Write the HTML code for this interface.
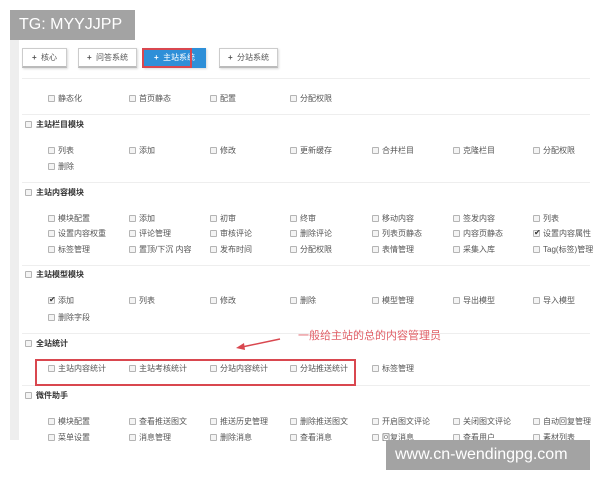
<!DOCTYPE html>
<html><head><meta charset="utf-8"><style>
*{margin:0;padding:0;box-sizing:border-box}
body{width:600px;height:480px;background:#fff;position:relative;overflow:hidden;font-family:"Liberation Sans","Noto Sans CJK SC",sans-serif}
.a{position:absolute}
.pg{left:10px;top:10px;width:580px;height:430px;background:#fff}
.strip{left:10px;top:10px;width:9px;height:430px;background:#eeeeee}
.cb{position:absolute;width:7px;height:7px;border:1px solid #b4b4b4;background:#f4f4f4;border-radius:1px}
.t{position:absolute;font-size:8px;color:#555;line-height:10px;white-space:nowrap}
.h{position:absolute;font-size:8px;color:#333;font-weight:bold;line-height:10px;white-space:nowrap}
.ln{position:absolute;left:22px;width:568px;height:1px;background:#eee}
.btn{position:absolute;top:48px;height:20px;border:1px solid #ccc;border-bottom:2px solid #bbb;background:#fff;font-size:8px;color:#555;line-height:17px;text-align:center;box-shadow:1px 1px 2px rgba(0,0,0,.15)}
.lab{position:absolute;background:#a3a3a3;color:#fff;font-size:16px;line-height:30px;padding-left:9px}
.rb{position:absolute;border-width:2px;border-style:solid;border-color:#d9474f}
</style></head><body>
<div class="a pg"></div><div class="a strip"></div>
<div class="lab" style="left:10px;top:10px;width:125px">TG: MYYJJPP</div>
<div class="btn" style="left:22px;width:45px"><b>+</b>&nbsp; 核心</div>
<div class="btn" style="left:78px;width:59px"><b>+</b>&nbsp; 问答系统</div>
<div class="btn" style="left:143px;width:63px;background:#2e8fd8;border-color:#2e8fd8;color:#fff"><b>+</b>&nbsp; 主站系统</div>
<div class="rb" style="left:142px;top:48px;width:50px;height:20px"></div>
<div class="btn" style="left:219px;width:59px"><b>+</b>&nbsp; 分站系统</div>
<div class="ln" style="top:78px"></div>
<div id="c"></div>
<div class="rb" style="left:35px;top:359px;width:321px;height:27px"></div>
<div class="a" style="left:298px;top:327px;font-size:11px;color:#e06068;white-space:nowrap">一般给主站的总的内容管理员</div>
<svg class="a" style="left:230px;top:334px" width="60" height="20"><line x1="50" y1="5" x2="12" y2="13" stroke="#d9474f" stroke-width="1.5"/><polygon points="6,14 14,9 15,16" fill="#d9474f"/></svg>
<div class="lab" style="left:386px;top:440px;width:204px;font-size:16px">www.cn-wendingpg.com</div>
<script>
var X=[48,129,210,290,372,453,533];
var rows=[
[94,["静态化","首页静态","配置","分配权限"]],
[146,["列表","添加","修改","更新缓存","合并栏目","克隆栏目","分配权限"]],
[162,["删除"]],
[214,["模块配置","添加","初审","终审","移动内容","签发内容","列表"]],
[229,["设置内容权重","评论管理","审核评论","删除评论","列表页静态","内容页静态","设置内容属性"]],
[245,["标签管理","置顶/下沉 内容","发布时间","分配权限","表情管理","采集入库","Tag(标签)管理"]],
[296,["添加","列表","修改","删除","模型管理","导出模型","导入模型"]],
[313,["删除字段"]],
[364,["主站内容统计","主站考核统计","分站内容统计","分站推送统计","标签管理"]],
[417,["模块配置","查看推送图文","推送历史管理","删除推送图文","开启图文评论","关闭图文评论","自动回复管理"]],
[433,["菜单设置","消息管理","删除消息","查看消息","回复消息","查看用户","素材列表"]]];
var heads=[[120,"主站栏目模块"],[188,"主站内容模块"],[270,"主站模型模块"],[339,"全站统计"],[391,"微件助手"]];
var lines=[114,182,265,333,385];
var h="";
rows.forEach(function(r){r[1].forEach(function(s,i){h+='<div class="cb" style="left:'+X[i]+'px;top:'+(r[0]+1)+'px"></div><div class="t" style="left:'+(X[i]+10)+'px;top:'+r[0]+'px">'+s+'</div>';});});
heads.forEach(function(r){h+='<div class="cb" style="left:25px;top:'+(r[0]+1)+'px"></div><div class="h" style="left:36px;top:'+r[0]+'px">'+r[1]+'</div>';});
lines.forEach(function(y){h+='<div class="ln" style="top:'+y+'px"></div>';});
h+='<div class="t" style="left:49px;top:295px;font-size:8px;color:#333">✔</div>';
h+='<div class="t" style="left:534px;top:228px;font-size:8px;color:#333">✔</div>';
document.getElementById("c").innerHTML=h;
</script>
</body></html>
